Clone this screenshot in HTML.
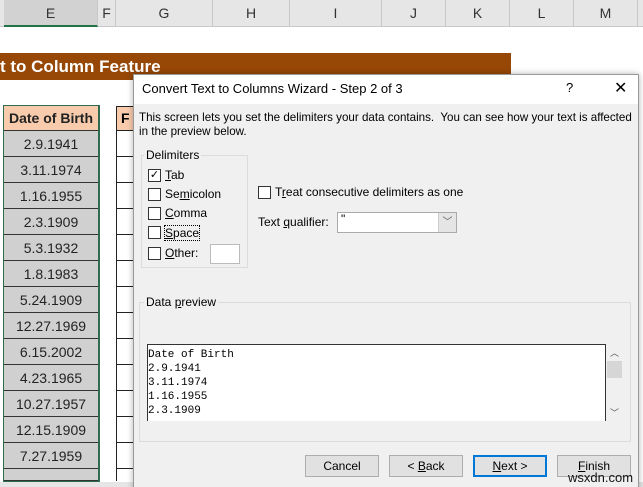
<!DOCTYPE html>
<html><head><style>
*{box-sizing:border-box;margin:0;padding:0}
html,body{width:643px;height:487px;overflow:hidden}
body{background:#fff;font-family:"Liberation Sans",sans-serif;position:relative}
.a{position:absolute}
.hd{top:0;height:27px;background:#e6e6e6;border-bottom:1px solid #c8c8c8}
.col{position:absolute;top:0;height:27px;border-right:1px solid #c8c8c8;text-align:center;line-height:27px;font-size:14px;color:#333}
.cell{position:absolute;left:4px;width:94px;height:26px;background:#d0d0d0;border-bottom:1px solid #333;text-align:center;line-height:26px;font-size:14px;color:#222}
.dl{font-size:12px;color:#000;position:absolute;white-space:nowrap}
.cb{position:absolute;width:13px;height:13px;border:1px solid #333;background:#fff}
.btn{position:absolute;top:455px;width:74px;height:22px;background:#e1e1e1;border:1px solid #adadad;font-size:12px;text-align:center;line-height:20px}
</style></head><body>
<div class="a hd" style="left:0;width:643px"></div>
<div class="col" style="left:4px;width:94px;background:#d2d2d2;border-bottom:2px solid #217346">E</div>
<div class="col" style="left:98px;width:18px">F</div>
<div class="col" style="left:116px;width:97px">G</div>
<div class="col" style="left:213px;width:77px">H</div>
<div class="col" style="left:290px;width:92px">I</div>
<div class="col" style="left:382px;width:64px">J</div>
<div class="col" style="left:446px;width:64px">K</div>
<div class="col" style="left:510px;width:64px">L</div>
<div class="col" style="left:574px;width:64px">M</div>
<div class="a" style="left:0;top:53px;width:511px;height:27px;background:#974706;color:#fff;font-weight:bold;font-size:17px;line-height:27px">t to Column Feature</div>
<div class="a" style="left:3px;top:105px;width:97px;height:378px;border:2px solid #2e6b4f"></div>
<div class="cell" style="top:106px;background:#f8cbad;font-weight:bold;height:25px;line-height:25px">Date of Birth</div>
<div class="cell" style="top:131px">2.9.1941</div>
<div class="cell" style="top:157px">3.11.1974</div>
<div class="cell" style="top:183px">1.16.1955</div>
<div class="cell" style="top:209px">2.3.1909</div>
<div class="cell" style="top:235px">5.3.1932</div>
<div class="cell" style="top:261px">1.8.1983</div>
<div class="cell" style="top:287px">5.24.1909</div>
<div class="cell" style="top:313px">12.27.1969</div>
<div class="cell" style="top:339px">6.15.2002</div>
<div class="cell" style="top:365px">4.23.1965</div>
<div class="cell" style="top:391px">10.27.1957</div>
<div class="cell" style="top:417px">12.15.1909</div>
<div class="cell" style="top:443px">7.27.1959</div>
<div class="cell" style="top:469px;height:12px"></div>
<div class="a" style="left:116px;top:106px;width:20px;height:25px;background:#f8cbad;border:1px solid #222;font-weight:bold;font-size:14px;line-height:23px;padding-left:4px">F</div>
<div class="a" style="left:116px;top:131px;width:20px;height:350px;border-left:1px solid #222;background:repeating-linear-gradient(#fff 0 25px,#222 25px 26px)"></div>
<div class="a" style="left:0;top:482px;width:643px;height:5px;background:#e6e6e6"></div>

<div class="a" style="left:133px;top:74px;width:506px;height:420px;background:#f0f0f0;border:1px solid #999;box-shadow:0 0 6px rgba(0,0,0,.3)"></div>
<div class="a" style="left:134px;top:75px;width:504px;height:29px;background:#fff"></div>
<div class="dl" style="left:142px;top:81px;font-size:13px">Convert Text to Columns Wizard - Step 2 of 3</div>
<div class="dl" style="left:566px;top:80px;font-size:13px">?</div>
<div class="dl" style="left:614px;top:78px;font-size:16px">✕</div>
<div class="dl" style="left:139px;top:111px;line-height:14px;font-size:11.6px">This screen lets you set the delimiters your data contains.&nbsp; You can see how your text is affected<br>in the preview below.</div>
<div class="a" style="left:141px;top:155px;width:107px;height:113px;border:1px solid #dcdcdc"></div>
<div class="dl" style="left:144px;top:148px;background:#f0f0f0;padding:0 2px">Delimiters</div>
<div class="cb" style="left:148px;top:169px;font-size:11px;line-height:10px;text-align:center">✓</div><div class="dl" style="left:165px;top:168px"><u>T</u>ab</div>
<div class="cb" style="left:148px;top:188px"></div><div class="dl" style="left:165px;top:187px">Se<u>m</u>icolon</div>
<div class="cb" style="left:148px;top:207px"></div><div class="dl" style="left:165px;top:206px"><u>C</u>omma</div>
<div class="cb" style="left:148px;top:226px"></div><div class="dl" style="left:164px;top:225px;border:1px dotted #000"><u>S</u>pace</div>
<div class="cb" style="left:148px;top:247px"></div><div class="dl" style="left:165px;top:246px"><u>O</u>ther:</div>
<div class="a" style="left:210px;top:244px;width:30px;height:20px;background:#fff;border:1px solid #bbb"></div>
<div class="cb" style="left:258px;top:186px"></div><div class="dl" style="left:275px;top:185px">T<u>r</u>eat consecutive delimiters as one</div>
<div class="dl" style="left:258px;top:215px">Text <u>q</u>ualifier:</div>
<div class="a" style="left:337px;top:212px;width:120px;height:21px;background:#fff;border:1px solid #aaa"></div>
<div class="a" style="left:438px;top:213px;width:18px;height:19px;background:#e5e5e5;border-left:1px solid #ccc;font-size:10px;text-align:center;line-height:19px;color:#555">﹀</div>
<div class="dl" style="left:341px;top:212px">"</div>
<div class="a" style="left:139px;top:302px;width:492px;height:140px;border:1px solid #dcdcdc"></div>
<div class="dl" style="left:144px;top:295px;background:#f0f0f0;padding:0 2px">Data <u>p</u>review</div>
<div class="a" style="left:147px;top:344px;width:459px;height:77px;background:#fff;border:1px solid #333;border-bottom:none;font-family:'Liberation Mono',monospace;font-size:11px;line-height:14px;padding:3px 0 0 0">Date of Birth<br>2.9.1941<br>3.11.1974<br>1.16.1955<br>2.3.1909</div>
<div class="a" style="left:606px;top:344px;width:16px;height:77px;background:#f0f0f0"></div>
<div class="a" style="left:607px;top:361px;width:15px;height:17px;background:#d6d6d6"></div>
<div class="dl" style="left:610px;top:346px;font-size:9px;color:#555">︿</div>
<div class="dl" style="left:610px;top:406px;font-size:9px;color:#555">﹀</div>
<div class="a" style="left:147px;top:421px;width:459px;height:16px;background:#f0f0f0"></div>
<div class="btn" style="left:305px">Cancel</div>
<div class="btn" style="left:389px">&lt; <u>B</u>ack</div>
<div class="btn" style="left:473px;border:2px solid #0078d7;line-height:18px"><u>N</u>ext &gt;</div>
<div class="btn" style="left:557px"><u>F</u>inish</div>
<div class="dl" style="left:568px;top:470px;font-size:13px;color:#111">wsxdn.com</div>
</body></html>
